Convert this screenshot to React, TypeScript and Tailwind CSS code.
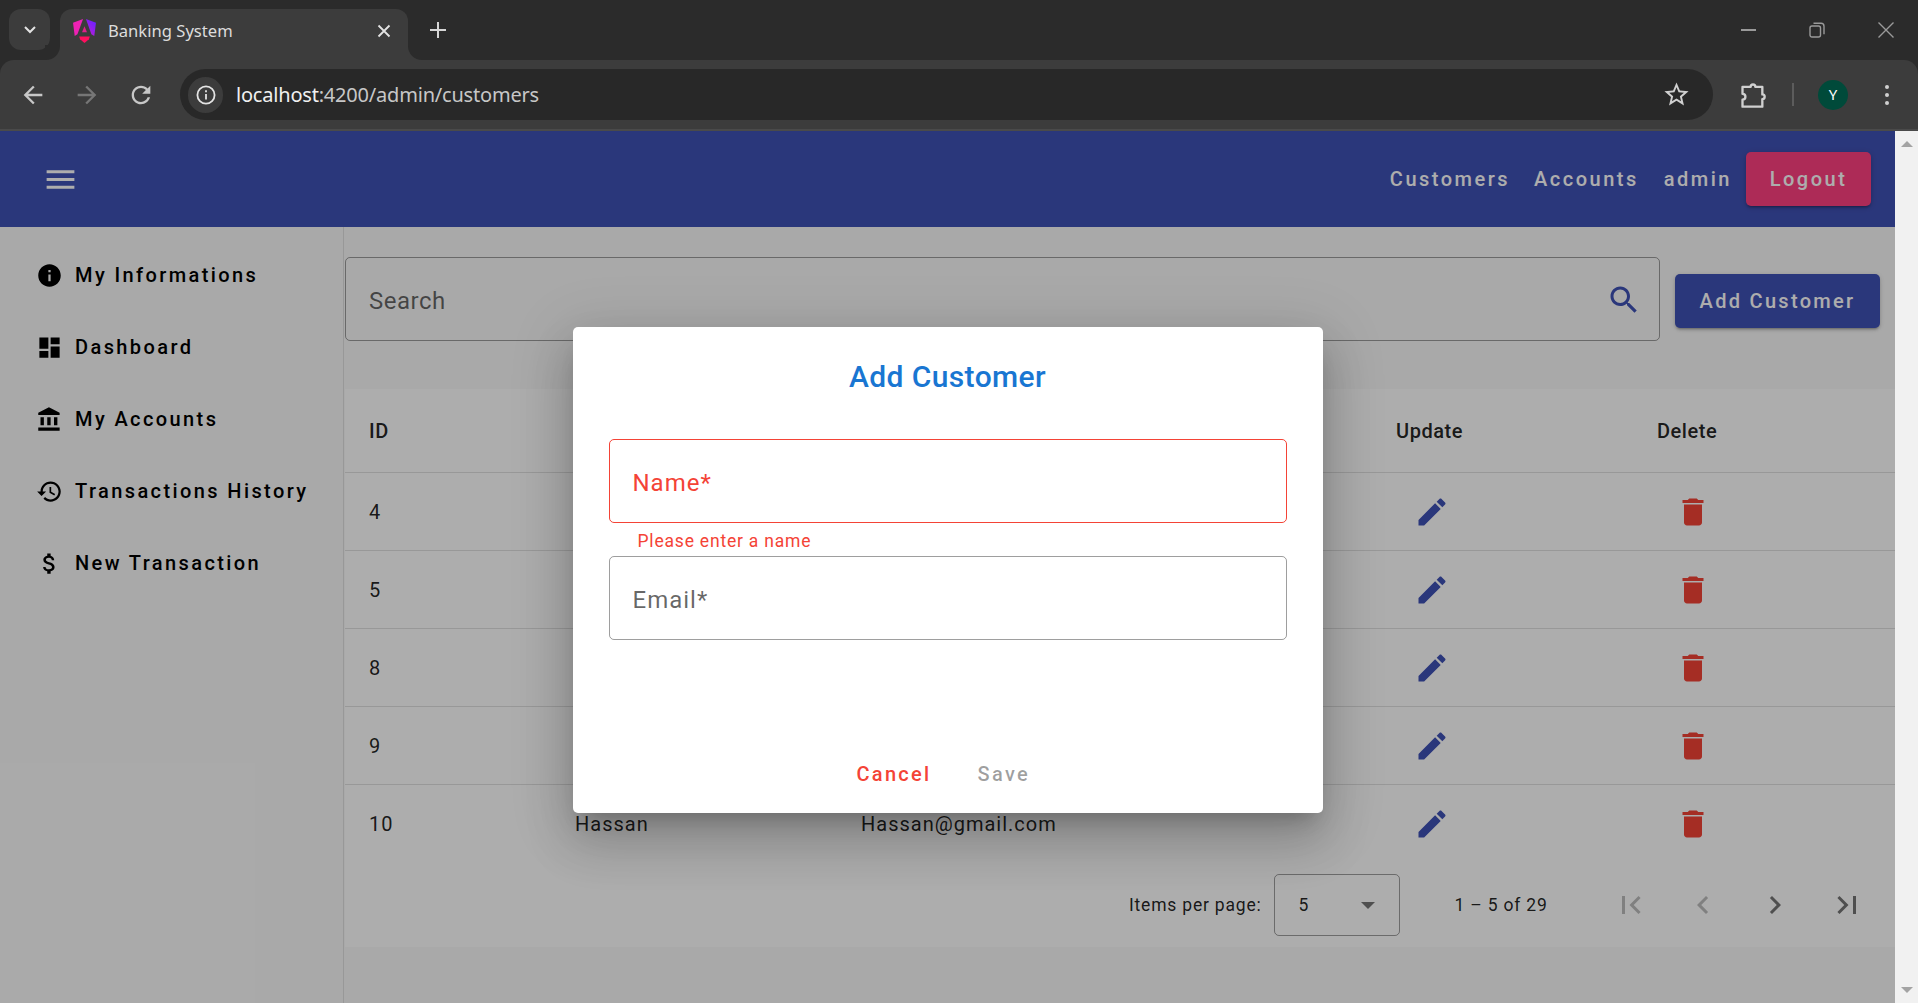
import type { ReactNode } from 'react';

const paths = {
  menu: 'M3 18h18v-2H3v2zm0-5h18v-2H3v2zm0-7v2h18V6H3z',
  info: 'M12 2C6.48 2 2 6.48 2 12s4.48 10 10 10 10-4.48 10-10S17.52 2 12 2zm1 15h-2v-6h2v6zm0-8h-2V7h2v2z',
  dashboard: 'M3 13h8V3H3v10zm0 8h8v-6H3v6zm10 0h8V11h-8v10zm0-18v6h8V3h-8z',
  bank: 'M4 10v7h3v-7H4zm6 0v7h3v-7h-3zM2 22h19v-3H2v3zm14-12v7h3v-7h-3zm-4.5-9L2 6v2h19V6l-9.5-5z',
  history:
    'M13 3c-4.97 0-9 4.03-9 9H1l3.89 3.89.07.14L9 12H6c0-3.87 3.13-7 7-7s7 3.13 7 7-3.13 7-7 7c-1.93 0-3.68-.79-4.94-2.06l-1.42 1.42C8.27 19.99 10.51 21 13 21c4.97 0 9-4.03 9-9s-4.03-9-9-9zm-1 5v5l4.28 2.54.72-1.21-3.5-2.08V8H12z',
  money:
    'M11.8 10.9c-2.27-.59-3-1.2-3-2.15 0-1.09 1.01-1.85 2.7-1.85 1.78 0 2.44.85 2.5 2.1h2.21c-.07-1.72-1.12-3.3-3.21-3.81V3h-3v2.16c-1.94.42-3.5 1.68-3.5 3.61 0 2.31 1.91 3.46 4.7 4.13 2.5.6 3 1.48 3 2.41 0 .69-.49 1.79-2.7 1.79-2.06 0-2.87-.92-2.98-2.1h-2.2c.12 2.19 1.76 3.42 3.68 3.83V21h3v-2.15c1.95-.37 3.5-1.5 3.5-3.55 0-2.84-2.43-3.81-4.7-4.4z',
  search:
    'M15.5 14h-.79l-.28-.27C15.41 12.59 16 11.11 16 9.5 16 5.91 13.09 3 9.5 3S3 5.91 3 9.5 5.91 16 9.5 16c1.61 0 3.09-.59 4.23-1.57l.27.28v.79l5 4.99L20.49 19l-4.99-5zm-6 0C7.01 14 5 11.99 5 9.5S7.01 5 9.5 5 14 7.01 14 9.5 11.99 14 9.5 14z',
  edit: 'M3 17.25V21h3.75L17.81 9.94l-3.75-3.75L3 17.25zM20.71 7.04c.39-.39.39-1.02 0-1.41l-2.34-2.34c-.39-.39-1.02-.39-1.41 0l-1.83 1.83 3.75 3.75 1.83-1.83z',
  trash: 'M6 19c0 1.1.9 2 2 2h8c1.1 0 2-.9 2-2V7H6v12zM19 4h-3.5l-1-1h-5l-1 1H5v2h14V4z',
  first: 'M18.41 16.59L13.82 12l4.59-4.59L17 6l-6 6 6 6zM6 6h2v12H6z',
  prev: 'M15.41 7.41L14 6l-6 6 6 6 1.41-1.41L10.83 12z',
  next: 'M10 6L8.59 7.41 13.17 12l-4.58 4.59L10 18l6-6z',
  last: 'M5.59 7.41L10.18 12l-4.59 4.59L7 18l6-6-6-6zM16 6h2v12h-2z',
  back: 'M20 11H7.83l5.59-5.59L12 4l-8 8 8 8 1.41-1.41L7.83 13H20v-2z',
  forward: 'M12 4l-1.41 1.41L16.17 11H4v2h12.17l-5.58 5.59L12 20l8-8z',
  reload:
    'M17.65 6.35C16.2 4.9 14.21 4 12 4c-4.42 0-7.99 3.58-7.99 8s3.57 8 7.99 8c3.73 0 6.84-2.55 7.73-6h-2.08c-.82 2.33-3.04 4-5.65 4-3.31 0-6-2.69-6-6s2.69-6 6-6c1.66 0 3.14.69 4.22 1.78L13 11h7V4l-2.35 2.35z',
  star: 'M22 9.24l-7.19-.62L12 2 9.19 8.63 2 9.24l5.46 4.73L5.82 21 12 17.27 18.18 21l-1.63-7.03L22 9.24zM12 15.4l-3.76 2.27 1-4.28-3.32-2.88 4.38-.38L12 6.1l1.71 4.04 4.38.38-3.32 2.88 1 4.28L12 15.4z',
};

const Icon = ({ d, className }: { d: string; className: string }) => (
  <svg viewBox="0 0 24 24" fill="currentColor" className={className}>
    <path d={d} />
  </svg>
);

const AngularLogo = () => (
  <svg viewBox="0 0 24 25" className="h-[24px] w-[23px] shrink-0">
    <defs>
      <linearGradient id="ng" x1="0" y1="1" x2="0.6" y2="0">
        <stop offset="0" stopColor="#c21fd0" />
        <stop offset="1" stopColor="#6f20ff" />
      </linearGradient>
    </defs>
    <path d="M10.5 0L0 3.8l1.8 13.8L4.6 16z" fill="#ee22b4" />
    <path d="M13.5 0L24 3.8l-1.8 13.8-3-1.6z" fill="url(#ng)" />
    <path d="M12 7.5l2.6 6.3H9.4z" fill="#e0218a" />
    <path d="M6.4 18.2h11.2l-1 3L12 25l-4.6-3.8z" fill="#ff0f5f" />
  </svg>
);

const BrowserChrome = () => (
  <div className="shrink-0 bg-[#2b2b2b] font-['Noto_Sans',sans-serif]">
    <div className="flex h-[60px] items-end">
      <div className="mb-[10px] ml-[9px] flex h-[41px] w-[41px] items-center justify-center rounded-[12px] bg-[#3c3c3c]">
        <svg viewBox="0 0 16 16" className="h-[16px] w-[16px] text-[#e3e3e3]" fill="none" stroke="currentColor" strokeWidth="2">
          <path d="M3 5l5 5 5-5" />
        </svg>
      </div>
      <div className="relative ml-[10px] flex h-[51px] w-[348px] items-center rounded-t-[12px] bg-[#3c3c3c] pb-[7px] pl-[13px]">
        <AngularLogo />
        <span className="ml-[12px] mt-[1px] text-[16.6px] text-[#dcdcdc]">Banking System</span>
        <svg viewBox="0 0 16 16" className="ml-auto mr-[16px] h-[16px] w-[16px] text-[#e3e3e3]" fill="none" stroke="currentColor" strokeWidth="1.8">
          <path d="M2.5 2.5l11 11M13.5 2.5l-11 11" />
        </svg>
        <div className="absolute bottom-0 left-[-15px] h-[15px] w-[15px] bg-[#3c3c3c]">
          <div className="h-full w-full rounded-br-[14px] bg-[#2b2b2b]" />
        </div>
        <div className="absolute bottom-0 right-[-15px] h-[15px] w-[15px] bg-[#3c3c3c]">
          <div className="h-full w-full rounded-bl-[14px] bg-[#2b2b2b]" />
        </div>
      </div>
      <svg viewBox="0 0 18 18" className="mb-[21px] ml-[21px] h-[18px] w-[18px] text-[#d6d6d6]" fill="none" stroke="currentColor" strokeWidth="2">
        <path d="M9 1v16M1 9h16" />
      </svg>
      <div className="mb-[21px] ml-auto flex h-[18px] items-center text-[#9a9a9a]">
        <div className="h-[2px] w-[15px] bg-current" />
        <svg viewBox="0 0 16 16" className="ml-[53px] h-[16px] w-[16px]" fill="none" stroke="currentColor" strokeWidth="1.4">
          <rect x="1" y="4" width="10.5" height="11" rx="2" />
          <path d="M4.5 1.2h7.5a3 3 0 0 1 3 3v8" />
        </svg>
        <svg viewBox="0 0 16 16" className="ml-[53px] mr-[24px] h-[16px] w-[16px]" fill="none" stroke="currentColor" strokeWidth="1.4">
          <path d="M.5.5l15 15M15.5.5l-15 15" />
        </svg>
      </div>
    </div>
    <div className="flex h-[69px] items-center rounded-t-[14px] bg-[#3c3c3c] pl-[19px]">
      <Icon d={paths.back} className="h-[28px] w-[28px] text-[#c7c7c7]" />
      <Icon d={paths.forward} className="ml-[26px] h-[28px] w-[28px] text-[#767676]" />
      <Icon d={paths.reload} className="ml-[26px] h-[28px] w-[28px] text-[#c7c7c7]" />
      <div className="ml-[25px] flex h-[51px] w-[1533px] items-center rounded-full bg-[#282828] pl-[8px] pr-[22px]">
        <div className="flex h-[36px] w-[35px] items-center justify-center rounded-full bg-[#3c3c3c]">
          <svg viewBox="0 0 20 20" className="h-[20px] w-[20px] text-[#e3e3e3]" fill="none" stroke="currentColor" strokeWidth="1.8">
            <circle cx="10" cy="10" r="8.6" />
            <path d="M10 9v5.5M10 5.2v2" />
          </svg>
        </div>
        <span className="ml-[13px] text-[20px] tracking-[-0.2px] text-[#c7c7c7]">
          <span className="text-[#f0f0f0]">localhost</span>:4200/admin/customers
        </span>
        <Icon d={paths.star} className="ml-auto h-[29px] w-[29px] text-[#d0d0d0]" />
      </div>
      <svg viewBox="0 0 24 24" className="ml-[26px] h-[28px] w-[28px] text-[#d0d0d0]" fill="none" stroke="currentColor" strokeWidth="2" strokeLinejoin="round">
        <path d="M3 5h7a2 2 0 0 1 4 0h6v6.5a2 2 0 0 1 0 4V22H3v-6a2.5 2.5 0 0 0 0-5z" />
      </svg>
      <div className="ml-[25px] h-[23px] w-[2px] bg-[#5c5c5c]" />
      <div className="ml-[24px] flex h-[30px] w-[30px] items-center justify-center rounded-full bg-[#004a3a] text-[15px] text-white">Y</div>
      <div className="ml-[37px] flex flex-col gap-[4px]">
        <div className="h-[4px] w-[4px] rounded-full bg-[#d0d0d0]" />
        <div className="h-[4px] w-[4px] rounded-full bg-[#d0d0d0]" />
        <div className="h-[4px] w-[4px] rounded-full bg-[#d0d0d0]" />
      </div>
    </div>
    <div className="h-[2px] bg-[#4a4a4a]" />
  </div>
);

const sideItems = [
  { icon: paths.info, label: 'My Informations' },
  { icon: paths.dashboard, label: 'Dashboard' },
  { icon: paths.bank, label: 'My Accounts' },
  { icon: paths.history, label: 'Transactions History' },
  { icon: paths.money, label: 'New Transaction' },
];

const rows = [
  { id: '4', name: '', email: '' },
  { id: '5', name: '', email: '' },
  { id: '8', name: '', email: '' },
  { id: '9', name: '', email: '' },
  { id: '10', name: 'Hassan', email: 'Hassan@gmail.com' },
];

const Cell = ({ children }: { children?: ReactNode }) => <div className="flex items-center pl-6">{children}</div>;

const CustomersTable = () => (
  <div className="ml-px mt-[48px] bg-white">
    <div className="grid h-[84px] grid-cols-[206px_286px_535px_261px_1fr] border-b border-[#e0e0e0] text-[20px] font-medium tracking-[0.55px] text-black/[0.87]">
      <Cell>ID</Cell>
      <Cell />
      <Cell />
      <Cell>Update</Cell>
      <Cell>Delete</Cell>
    </div>
    {rows.map((row, i) => (
      <div
        key={row.id}
        className={
          i < rows.length - 1
            ? 'grid h-[78px] grid-cols-[206px_286px_535px_261px_1fr] border-b border-[#e0e0e0] text-[20px] tracking-[1px] text-black/[0.87]'
            : 'grid h-[78px] grid-cols-[206px_286px_535px_261px_1fr] text-[20px] tracking-[1px] text-black/[0.87]'
        }
      >
        <Cell>{row.id}</Cell>
        <Cell>{row.name}</Cell>
        <Cell>{row.email}</Cell>
        <Cell>
          <Icon d={paths.edit} className="ml-[18px] h-[36px] w-[36px] text-[#3f51b5]" />
        </Cell>
        <Cell>
          <Icon d={paths.trash} className="ml-[18px] h-[36px] w-[36px] text-[#f44336]" />
        </Cell>
      </div>
    ))}
    <div className="flex h-[84px] items-center text-[17.5px] tracking-[0.8px] text-black/[0.87]">
      <span className="ml-[784px]">Items per page:</span>
      <div className="ml-[12px] flex h-[62px] w-[126px] items-center rounded-[5px] border border-black/[0.38] pl-[24px] pr-[24px]">
        <span>5</span>
        <div className="ml-auto h-0 w-0 border-x-[7px] border-t-[7px] border-x-transparent border-t-black/[0.54]" />
      </div>
      <span className="ml-[55px]">1 – 5 of 29</span>
      <div className="ml-[65px] flex text-black/[0.54]">
        <Icon d={paths.first} className="h-[36px] w-[36px] text-black/[0.26]" />
        <Icon d={paths.prev} className="ml-[36px] h-[36px] w-[36px] text-black/[0.26]" />
        <Icon d={paths.next} className="ml-[36px] h-[36px] w-[36px]" />
        <Icon d={paths.last} className="ml-[36px] h-[36px] w-[36px]" />
      </div>
    </div>
  </div>
);

const AddCustomerDialog = () => (
  <div className="absolute inset-0 flex items-center justify-center bg-black/[0.32] pt-[6px]">
    <div className="flex h-[486px] w-[750px] flex-col rounded-[5px] bg-white px-[36px] shadow-[0_14px_19px_-9px_rgba(0,0,0,0.2),0_30px_48px_4px_rgba(0,0,0,0.14),0_11px_58px_10px_rgba(0,0,0,0.12)]">
      <h2 className="mt-[30px] text-center text-[30px] font-medium leading-[40px] tracking-[0.4px] text-[#1976d2]">Add Customer</h2>
      <div className="mt-[42px] flex h-[84px] items-center rounded-[5px] border border-[#f44336] pl-[23px] pt-[3px] text-[24px] tracking-[1px] text-[#f44336]">
        Name*
      </div>
      <p className="ml-[29px] mt-[7px] h-[26px] text-[17.5px] leading-[22px] tracking-[0.8px] text-[#f44336]">Please enter a name</p>
      <div className="flex h-[84px] items-center rounded-[5px] border border-black/[0.38] pl-[23px] pt-[3px] text-[24px] tracking-[1px] text-black/60">
        Email*
      </div>
      <div className="mt-[119px] flex text-[20px] font-medium tracking-[2.3px]">
        <span className="ml-[248px] text-[#f44336]">Cancel</span>
        <span className="ml-[46px] text-black/[0.38]">Save</span>
      </div>
    </div>
  </div>
);

const App = () => (
  <div className="flex h-[1003px] flex-col overflow-hidden font-[Roboto,sans-serif]">
    <BrowserChrome />
    <div className="relative flex min-h-0 flex-1 bg-[#f1f1f1]">
      <div className="relative flex min-w-0 flex-1 flex-col bg-[#fafafa]">
        <header className="flex h-[96px] shrink-0 items-center bg-[#3f51b5] pl-[42px] pr-[24px] text-[20px] font-medium tracking-[2.5px] text-white">
          <Icon d={paths.menu} className="h-[37px] w-[37px]" />
          <span className="ml-auto">Customers</span>
          <span className="ml-[24px]">Accounts</span>
          <span className="ml-[25px]">admin</span>
          <div className="ml-[14px] flex h-[54px] w-[125px] items-center justify-center rounded-[5px] bg-[#ff4081] shadow-[0_3px_2px_-2px_rgba(0,0,0,0.2),0_2px_3px_0_rgba(0,0,0,0.14),0_1px_6px_0_rgba(0,0,0,0.12)]">
            Logout
          </div>
        </header>
        <div className="flex min-h-0 flex-1">
          <aside className="w-[344px] shrink-0 border-r border-[#e0e0e0] pl-[36px] pt-[12px]">
            {sideItems.map((item) => (
              <div key={item.label} className="flex h-[72px] items-center text-[20px] font-medium tracking-[2.4px] text-black">
                <Icon d={item.icon} className="h-[27px] w-[27px]" />
                <span className="ml-[12px]">{item.label}</span>
              </div>
            ))}
          </aside>
          <main className="min-w-0 flex-1">
            <div className="ml-px mt-[30px] flex pr-[15px]">
              <div className="flex h-[84px] flex-1 items-center rounded-[5px] border border-black/[0.38] pl-[23px] pr-[17px] text-[24px] tracking-[0.5px] text-black/60">
                <span className="pt-[3px]">Search</span>
                <Icon d={paths.search} className="ml-auto mt-[2px] h-[36px] w-[36px] text-[#3f51b5]" />
              </div>
              <div className="ml-[15px] mt-[17px] flex h-[54px] w-[205px] items-center justify-center rounded-[5px] bg-[#3f51b5] text-[20px] font-medium tracking-[2.3px] text-white shadow-[0_3px_2px_-2px_rgba(0,0,0,0.2),0_2px_3px_0_rgba(0,0,0,0.14),0_1px_6px_0_rgba(0,0,0,0.12)]">
                Add Customer
              </div>
            </div>
            <CustomersTable />
          </main>
        </div>
      </div>
      <div className="flex w-[23px] shrink-0 flex-col items-center justify-between py-[10px]">
        <div className="h-0 w-0 border-x-[6px] border-b-[6px] border-x-transparent border-b-[#a3a3a3]" />
        <div className="h-0 w-0 border-x-[6px] border-t-[6px] border-x-transparent border-t-[#a3a3a3]" />
      </div>
      <div className="absolute inset-y-0 left-0 right-[23px]">
        <AddCustomerDialog />
      </div>
    </div>
  </div>
);

export default App;
